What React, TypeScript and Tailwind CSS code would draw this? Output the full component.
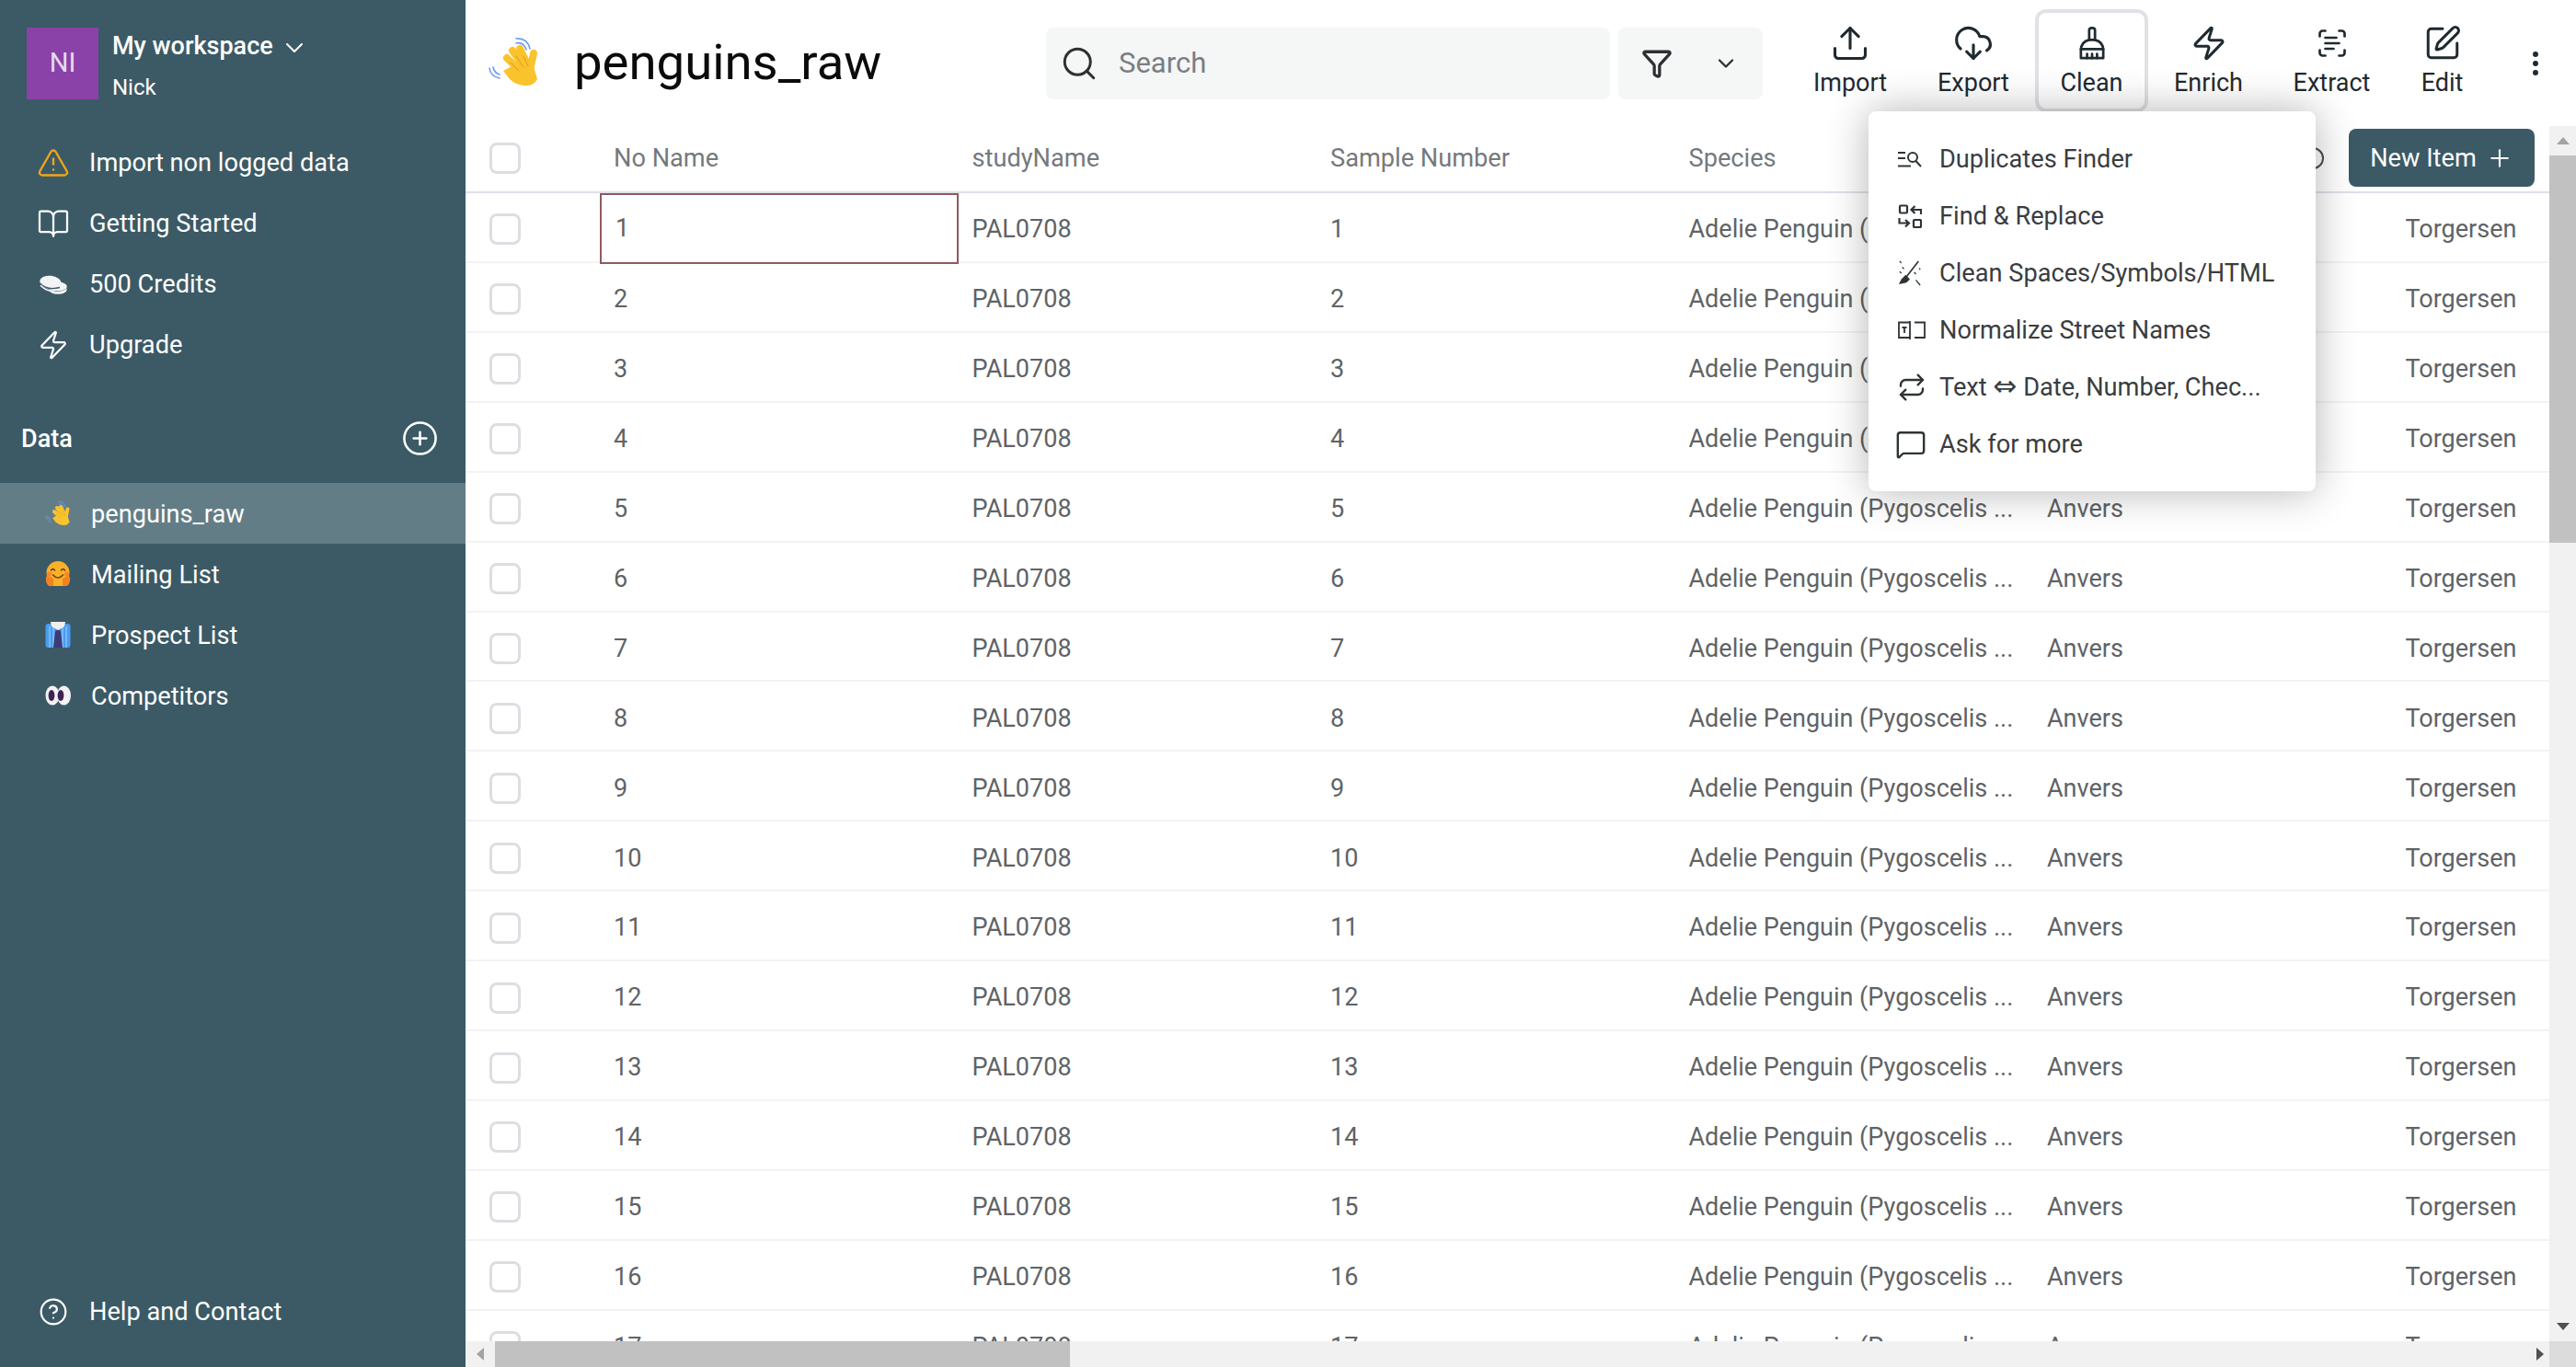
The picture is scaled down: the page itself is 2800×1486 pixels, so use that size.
import type { ReactNode } from "react";
import {
  BookOpen,
  ChevronDown,
  CircleHelp,
  CirclePlus,
  CloudDownload,
  EllipsisVertical,
  Funnel,
  MessageSquare,
  Plus,
  Repeat,
  ScanText,
  Search,
  SquarePen,
  TriangleAlert,
  Upload,
  Zap,
} from "lucide-react";

function WaveHand({ className }: { className: string }) {
  return (
    <svg viewBox="11 10 56 54" className={className} fill="none">
      <g stroke="#6f9cf0" strokeWidth="1.6" strokeLinecap="round">
        <path d="M41 17 Q49 15 52 24" />
        <path d="M41 12 Q53 11 56 23" />
        <path d="M16 43 Q17 49 23 51" />
        <path d="M12 44 Q13 53 23 55" />
      </g>
      <g stroke="#f9c32b" strokeWidth="8" strokeLinecap="round">
        <path d="M31 33 L44 46" />
        <path d="M37 25 L49 42" />
        <path d="M45 23 L54 41" />
        <path d="M60 28 L56 46" />
      </g>
      <path d="M27 47 L46 37 L60 42 L64 56 Q60 64 50 63 Q40 62 34 56 Z" fill="#f9c32b" />
      <g stroke="#e5952a" strokeWidth="1" strokeLinecap="round">
        <path d="M35 38 L44 47" />
        <path d="M41 31 L49 43" />
        <path d="M49 31 L54 42" />
      </g>
    </svg>
  );
}

function HugFace({ className }: { className: string }) {
  return (
    <svg viewBox="0 0 28 28" className={className} fill="none">
      <circle cx="14" cy="12.5" r="12.5" fill="#fbb126" />
      <path d="M1 17 Q0 24 4 27 L11 27 L9 19 Q4 15 1 17 Z" fill="#f58220" />
      <path d="M27 17 Q28 24 24 27 L17 27 L19 19 Q24 15 27 17 Z" fill="#f58220" />
      <rect x="9" y="21" width="10" height="6" fill="#fbb126" />
      <circle cx="4.5" cy="14" r="2.5" fill="#f2703c" opacity="0.7" />
      <circle cx="23.5" cy="14" r="2.5" fill="#f2703c" opacity="0.7" />
      <g stroke="#5c3a1e" strokeWidth="1.5" strokeLinecap="round">
        <path d="M6.5 10 Q8.5 7 10.5 10" />
        <path d="M17.5 10 Q19.5 7 21.5 10" />
        <path d="M8.5 15 Q14 21 19.5 15" />
      </g>
    </svg>
  );
}

function Shirt({ className }: { className: string }) {
  return (
    <svg viewBox="0 0 28 28" className={className} fill="none">
      <rect x="0.5" y="2" width="27" height="26" rx="3" fill="#4a9cf0" />
      <g stroke="#8cc4fa" strokeWidth="1.4">
        <path d="M5 5 V28" />
        <path d="M9 5 V28" />
        <path d="M19 5 V28" />
        <path d="M23 5 V28" />
      </g>
      <path d="M6 0 H22 L21 5 L14 9 L7 5 Z" fill="#f1efee" />
      <path d="M12 9 H16 L17 11 L19 28 H9 L11 11 Z" fill="#3d3a78" />
    </svg>
  );
}

function Eyes({ className }: { className: string }) {
  return (
    <svg viewBox="0 0 28 22" className={className} fill="none">
      <ellipse cx="8" cy="11" rx="7.5" ry="10.5" fill="#f4f2f4" />
      <ellipse cx="20.5" cy="11" rx="7.5" ry="10.5" fill="#f4f2f4" />
      <ellipse cx="7" cy="11" rx="3.4" ry="6" fill="#3d2352" />
      <ellipse cx="17" cy="11" rx="3.4" ry="6" fill="#3d2352" />
    </svg>
  );
}

function Coins({ className }: { className: string }) {
  return (
    <svg viewBox="0 0 30 21" className={className}>
      <ellipse cx="20" cy="15.5" rx="9.8" ry="5.3" fill="#f2f4f5" />
      <path d="M11 15.5 Q20 20 29.6 14.5" stroke="#3b5a66" strokeWidth="1" fill="none" />
      <ellipse cx="20" cy="12.5" rx="9.8" ry="5" fill="#f2f4f5" />
      <ellipse cx="12" cy="8" rx="11.8" ry="7.2" transform="rotate(8 12 8)" fill="#f2f4f5" />
      <path d="M0.5 9 Q8 17 22 13.5" stroke="#3b5a66" strokeWidth="1.3" fill="none" />
      <path d="M1 11 Q8 19 17 16.5" stroke="#f2f4f5" strokeWidth="1.6" fill="none" />
    </svg>
  );
}

function Broom({ className }: { className: string }) {
  return (
    <svg viewBox="0 0 32 40" className={className} fill="none" stroke="currentColor" strokeWidth="3" strokeLinejoin="round" strokeLinecap="round">
      <path d="M12.5 16 V4 Q12.5 1.5 16 1.5 Q19.5 1.5 19.5 4 V16" />
      <path d="M12.5 16 Q3 18 2.5 28 V38 H29.5 V28 Q29 18 19.5 16 Z" />
      <path d="M2.5 27 H29.5" />
      <path d="M10 33 V38 M16 33 V38 M22 33 V38" />
    </svg>
  );
}

function DuplicatesIcon() {
  return (
    <svg viewBox="0 0 26 18" className="h-[18px] w-[26px]" fill="none" stroke="#2e3436" strokeWidth="2">
      <path d="M0 2 H8 M0 8 H8 M0 16.5 H14" />
      <circle cx="16" cy="7" r="5" />
      <path d="M19.5 11 L25 17" />
    </svg>
  );
}

function FindReplaceIcon() {
  return (
    <svg viewBox="0 0 26 26" className="h-[26px] w-[26px]" fill="none" stroke="#2e3436" strokeWidth="2.2">
      <rect x="2" y="1.5" width="8" height="8" rx="1" />
      <rect x="17" y="17" width="8" height="8" rx="1" />
      <path d="M25 11 V6 H15 M18.5 2 L14.5 6 L18.5 10" />
      <path d="M1.5 15 V20.5 H11 M8 17 L12 20.5 L8 24.5" />
    </svg>
  );
}

function WandIcon() {
  return (
    <svg viewBox="0 0 28 30" className="h-[28px] w-[26px]" fill="none" stroke="#2e3436">
      <path d="M24 1 L10 19" strokeWidth="1.8" />
      <path d="M9 17 L14 22 L10 26 L1 28 L4 22 Z" fill="#2e3436" stroke="none" />
      <path d="M2 1 L4 3 M5 8 L7 10 M19 14 L21 16 M25 9 L26 11 M21 23 L26 29 M2 13 L4 15" strokeWidth="1.4" />
    </svg>
  );
}

function NormalizeIcon() {
  return (
    <svg viewBox="0 0 30 20" className="h-[20px] w-[30px]" fill="none" stroke="#2e3436" strokeWidth="1.8">
      <path d="M13 1.5 H1 V18 H13" />
      <path d="M13 0 V20" />
      <path d="M18 1.5 H29 V18 H18" />
      <path d="M4.5 7 H9.5 M7 7 V13" />
    </svg>
  );
}

const navItems: { label: string; icon: ReactNode }[] = [
  { label: "Import non logged data", icon: <TriangleAlert className="h-[36px] w-[36px] text-[#f2a51a]" strokeWidth={1.6} /> },
  { label: "Getting Started", icon: <BookOpen className="h-[36px] w-[36px] text-white" strokeWidth={1.5} /> },
  { label: "500 Credits", icon: <Coins className="h-[21px] w-[30px]" /> },
  { label: "Upgrade", icon: <Zap className="h-[34px] w-[34px] text-white" strokeWidth={1.6} /> },
];

const dataItems: { label: string; icon: ReactNode; active?: boolean }[] = [
  { label: "penguins_raw", icon: <WaveHand className="h-[28px] w-[28px]" />, active: true },
  { label: "Mailing List", icon: <HugFace className="h-[28px] w-[28px]" /> },
  { label: "Prospect List", icon: <Shirt className="h-[28px] w-[28px]" /> },
  { label: "Competitors", icon: <Eyes className="h-[22px] w-[28px]" /> },
];

const actions: { label: string; icon: ReactNode; width: string; active?: boolean }[] = [
  { label: "Import", icon: <Upload className="h-[44px] w-[44px]" strokeWidth={1.7} />, width: "w-[134px]" },
  { label: "Export", icon: <CloudDownload className="h-[44px] w-[44px]" strokeWidth={1.7} />, width: "w-[134px]" },
  { label: "Clean", icon: <Broom className="h-[36px] w-[30px]" />, width: "w-[123px]", active: true },
  { label: "Enrich", icon: <Zap className="h-[40px] w-[40px]" strokeWidth={1.8} />, width: "w-[131px]" },
  { label: "Extract", icon: <ScanText className="h-[36px] w-[36px]" strokeWidth={1.8} />, width: "w-[137px]" },
  { label: "Edit", icon: <SquarePen className="h-[42px] w-[42px]" strokeWidth={1.7} />, width: "w-[103px]" },
];

const menuItems: { label: ReactNode; key: string; icon: ReactNode }[] = [
  { key: "dup", label: "Duplicates Finder", icon: <DuplicatesIcon /> },
  { key: "find", label: "Find & Replace", icon: <FindReplaceIcon /> },
  { key: "clean", label: "Clean Spaces/Symbols/HTML", icon: <WandIcon /> },
  { key: "street", label: "Normalize Street Names", icon: <NormalizeIcon /> },
  {
    key: "text",
    label: (
      <span>
        Text <span className="font-['DejaVu_Sans',sans-serif] text-[31px] leading-none">⇔</span> Date, Number, Chec...
      </span>
    ),
    icon: <Repeat className="-ml-[1px] h-[32px] w-[32px] text-[#2e3436]" strokeWidth={1.8} />,
  },
  { key: "ask", label: "Ask for more", icon: <MessageSquare className="-ml-[3px] h-[34px] w-[34px] text-[#2e3436]" strokeWidth={1.7} /> },
];

const rows = Array.from({ length: 17 }, (_, i) => i + 1);

function Checkbox() {
  return <div className="h-[34px] w-[34px] rounded-lg border-[3px] border-[#dcdee2]" />;
}

function Sidebar() {
  return (
    <aside className="flex h-full w-[506px] shrink-0 flex-col bg-[#3b5a66] text-white">
      <div className="flex items-start pl-[29px] pt-[30px]">
        <div className="flex h-[78px] w-[78px] items-center justify-center bg-[#8a42a8] text-[29px] text-[#e4dcea]">NI</div>
        <div className="ml-[15px]">
          <div className="flex h-[40px] items-center text-[27px] font-medium">
            My workspace
            <ChevronDown className="ml-[7px] mt-1 h-[32px] w-[32px]" strokeWidth={1.5} />
          </div>
          <div className="mt-[5px] text-[24px] leading-[40px]">Nick</div>
        </div>
      </div>
      <nav className="mt-[29px] flex flex-col">
        {navItems.map((item) => (
          <div key={item.label} className="flex h-[66px] items-center">
            <div className="flex w-[97px] justify-center pl-[19px]">{item.icon}</div>
            <span className="text-[27.2px]">{item.label}</span>
          </div>
        ))}
      </nav>
      <div className="mt-[35px] flex h-[66px] items-center justify-between pl-[23px] pr-[29px]">
        <span className="pt-[2px] text-[27px] font-medium">Data</span>
        <CirclePlus className="h-[41px] w-[41px]" strokeWidth={1.5} />
      </div>
      <div className="mt-[16px] flex flex-col">
        {dataItems.map((item) => (
          <div key={item.label} className={`flex h-[66px] items-center pl-[49px] ${item.active ? "bg-[#637d87]" : ""}`}>
            <div className="flex w-[50px] justify-start">{item.icon}</div>
            <span className="pt-[2px] text-[27.2px]">{item.label}</span>
          </div>
        ))}
      </div>
      <div className="mb-[27px] mt-auto flex h-[66px] items-center pl-[42px]">
        <CircleHelp className="h-[32px] w-[32px]" strokeWidth={1.6} />
        <span className="ml-[23px] text-[27.2px]">Help and Contact</span>
      </div>
    </aside>
  );
}

function TopBar() {
  return (
    <header className="flex h-[137px] shrink-0 items-start bg-white">
      <div className="ml-[25px] mt-[40px]">
        <WaveHand className="h-[54px] w-[56px]" />
      </div>
      <h1 className="ml-[37px] mt-[30px] w-[513px] text-[54.5px] font-normal leading-[74px] text-[#0b0b0b]">penguins_raw</h1>
      <div className="mt-[30px] flex h-[78px] w-[613px] items-center rounded-lg bg-[#f5f6f6] pl-[15px] text-[#2b3033]">
        <Search className="h-[42px] w-[42px]" strokeWidth={1.7} />
        <span className="ml-[22px] text-[31px] text-[#7a7e82]">Search</span>
      </div>
      <div className="ml-[9px] mt-[30px] flex h-[78px] w-[157px] items-center rounded-lg bg-[#f5f6f6] pl-[25px] text-[#2b3033]">
        <Funnel className="h-[34px] w-[34px]" strokeWidth={2.3} />
        <ChevronDown className="ml-[44px] h-[28px] w-[28px]" strokeWidth={2} />
      </div>
      <div className="ml-[28px] mt-[10px] flex items-start">
        {actions.map((a) => (
          <div
            key={a.label}
            className={`flex h-[112px] shrink-0 flex-col items-center rounded-xl border-4 pt-[14px] text-[#1f2a30] ${a.width} ${a.active ? "border-[#e0e2e6]" : "border-transparent"}`}
          >
            <div className="flex h-[38px] items-center">{a.icon}</div>
            <span className="mt-[5px] text-[27px] leading-[38px]">{a.label}</span>
          </div>
        ))}
        <EllipsisVertical className="ml-[33px] mt-[42px] h-[34px] w-[34px] shrink-0 text-[#1f2a30]" strokeWidth={2.2} />
      </div>
    </header>
  );
}

function HeaderCell({ label, children }: { label: string; children?: ReactNode }) {
  return (
    <div className="flex w-[389.5px] shrink-0 items-center pl-[15px] text-[27.2px] text-[#75797c]">
      {label}
      {children}
    </div>
  );
}

function DataTable() {
  return (
    <div className="min-h-0 flex-1 overflow-hidden">
      <div className="flex h-[73px] border-b-2 border-[#dfe0e8] pb-[1px]">
        <div className="flex w-[146px] shrink-0 items-center pl-[26px]">
          <Checkbox />
        </div>
        <HeaderCell label="No Name" />
        <HeaderCell label="studyName" />
        <HeaderCell label="Sample Number" />
        <HeaderCell label="Species" />
        <HeaderCell label="Region">
          <div className="ml-[193px] h-[24px] w-[24px] shrink-0 rounded-full border-2 border-[#4a4f52]" />
        </HeaderCell>
        <HeaderCell label="Island" />
      </div>
      {rows.map((n) => (
        <div key={n} className="flex h-[75.93px] border-b-2 border-[#f3f3f5] pt-[5px] text-[27px] text-[#5f6366]">
          <div className="flex w-[146px] shrink-0 items-center pl-[26px]">
            <Checkbox />
          </div>
          <div className={`flex w-[389.5px] shrink-0 items-center pl-[15px] ${n === 1 ? "-mt-[5px] h-[77px] border-2 border-[#8f5a60] pl-[13px]" : ""}`}>{n}</div>
          <div className="flex w-[389.5px] shrink-0 items-center pl-[15px]">PAL0708</div>
          <div className="flex w-[389.5px] shrink-0 items-center pl-[15px]">{n}</div>
          <div className="flex w-[389.5px] shrink-0 items-center pl-[15px]">Adelie Penguin (Pygoscelis ...</div>
          <div className="flex w-[389.5px] shrink-0 items-center pl-[15px]">Anvers</div>
          <div className="flex w-[389.5px] shrink-0 items-center pl-[15px]">Torgersen</div>
        </div>
      ))}
    </div>
  );
}

function CleanMenu() {
  return (
    <div className="absolute left-[1525px] top-[121px] z-10 flex h-[413px] w-[486px] flex-col rounded-lg bg-white pt-[21px] shadow-[0_0_45px_rgba(0,0,0,0.3)]">
      {menuItems.map((m) => (
        <div key={m.key} className="flex h-[62px] shrink-0 items-center pl-[32px] text-[27.2px] text-[#3a3d40]">
          <div className="flex w-[45px] shrink-0 items-center">{m.icon}</div>
          {m.label}
        </div>
      ))}
    </div>
  );
}

export default function App() {
  return (
    <div className="flex h-[1486px] w-[2800px] overflow-hidden bg-white font-['Roboto',sans-serif]">
      <Sidebar />
      <main className="relative flex min-w-0 flex-1 flex-col">
        <TopBar />
        <div className="flex min-h-0 flex-1">
          <div className="flex min-w-0 flex-1 flex-col">
            <DataTable />
            <div className="flex h-[28px] shrink-0 items-center bg-[#f1f1f1]">
              <div className="flex w-[32px] justify-center">
                <div className="h-0 w-0 border-y-[7px] border-r-[8px] border-y-transparent border-r-[#a3a3a3]" />
              </div>
              <div className="h-full w-[625px] bg-[#c1c1c1]" />
              <div className="ml-auto mr-[6px] h-0 w-0 border-y-[7px] border-l-[8px] border-y-transparent border-l-[#505050]" />
            </div>
          </div>
          <div className="flex w-[29px] shrink-0 flex-col bg-[#f1f1f1]">
            <div className="flex h-[32px] shrink-0 items-center justify-center">
              <div className="h-0 w-0 border-x-[7px] border-b-[8px] border-x-transparent border-b-[#a3a3a3]" />
            </div>
            <div className="h-[421px] shrink-0 bg-[#c1c1c1]" />
            <div className="mb-[12px] mt-auto flex justify-center">
              <div className="h-0 w-0 border-x-[7px] border-t-[8px] border-x-transparent border-t-[#505050]" />
            </div>
            <div className="h-[28px] shrink-0 bg-[#dcdcdc]" />
          </div>
        </div>
        <button className="absolute left-[2047px] top-[140px] z-[5] flex h-[63px] w-[202px] items-center justify-center rounded-lg bg-[#3b5a66] pt-[1px] text-[27.2px] text-white">
          New Item
          <Plus className="ml-[10px] h-[30px] w-[30px]" strokeWidth={1.7} />
        </button>
        <CleanMenu />
      </main>
    </div>
  );
}
